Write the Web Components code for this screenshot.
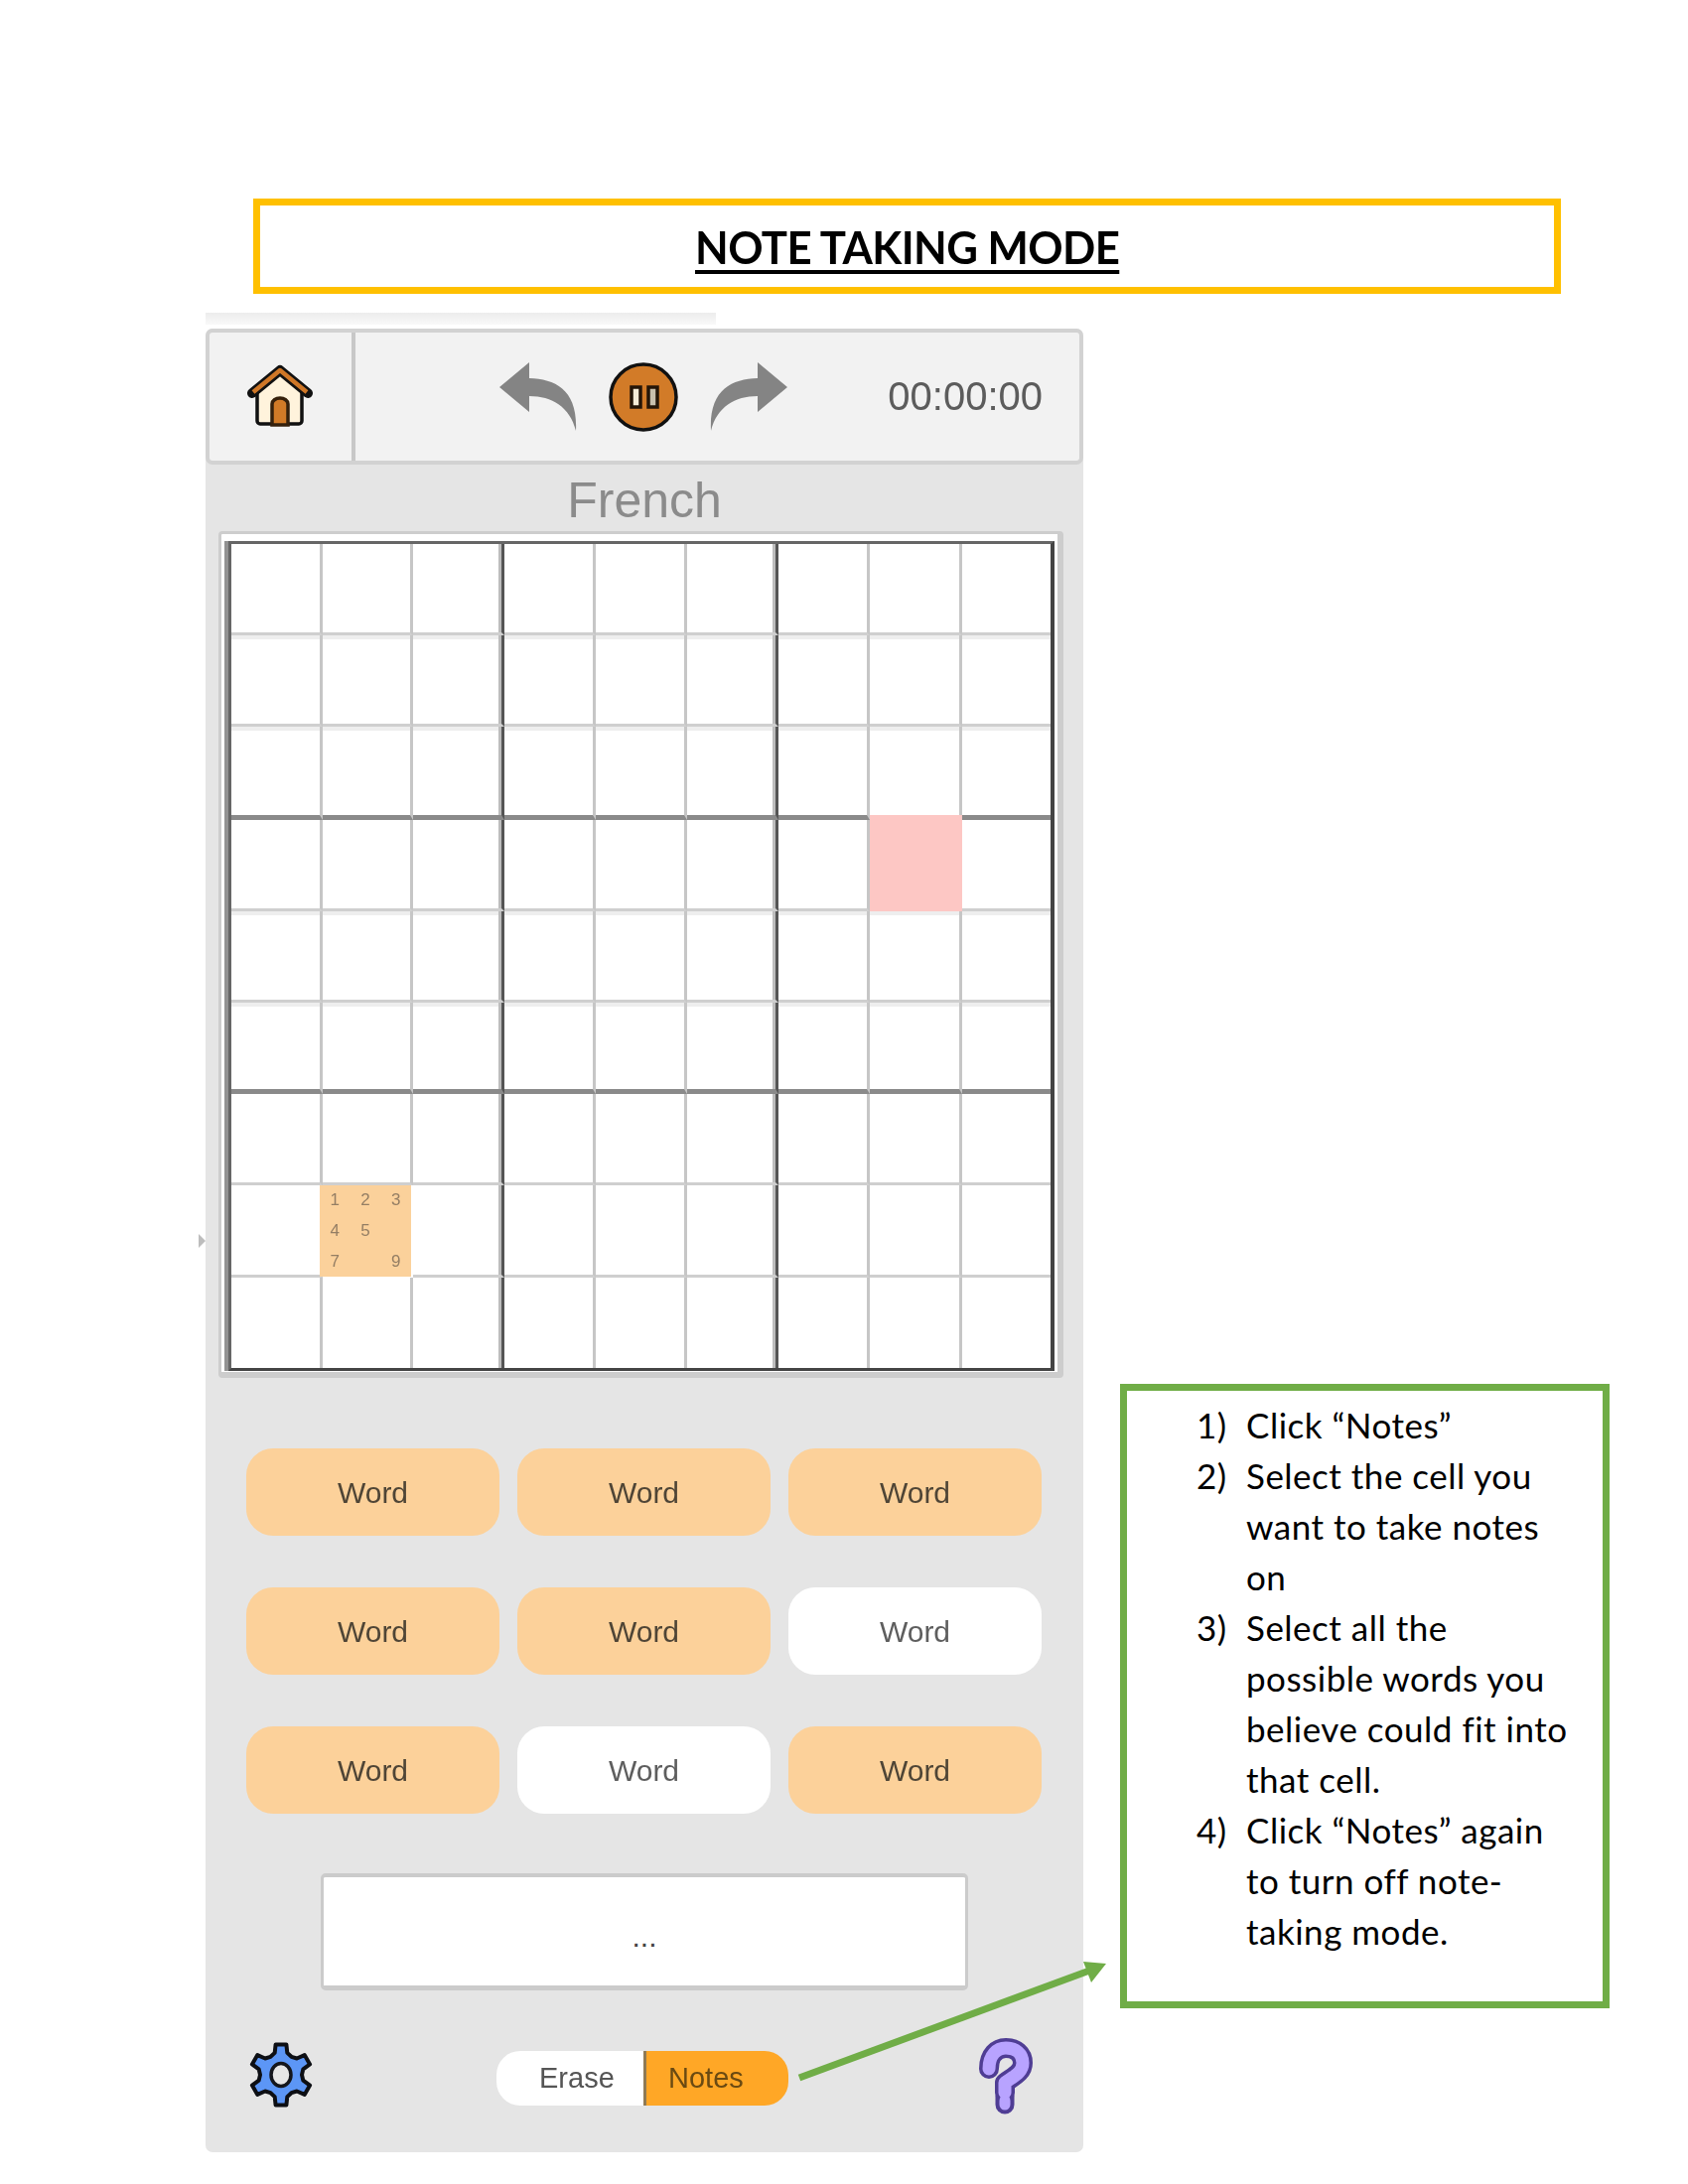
<!DOCTYPE html>
<html>
<head>
<meta charset="utf-8">
<title>Note taking mode</title>
<style>
body { margin: 0; background: #fff; font-family: "Liberation Sans", Arial, sans-serif; }
</style>
</head>
<body>
<note-page>
  <title-banner>NOTE TAKING MODE</title-banner>
  <game-panel></game-panel>
  <help-box>
    <li>Click “Notes”</li>
    <li>Select the cell you want to take notes on</li>
    <li>Select all the possible words you believe could fit into that cell.</li>
    <li>Click “Notes” again to turn off note-taking mode.</li>
  </help-box>
</note-page>

<script>
// small helper so every element below looks the same
function shadow(el, html) {
  el.attachShadow({ mode: "open" }).innerHTML = html;
}

class NotePage extends HTMLElement {
  constructor() {
    super();
    shadow(this, `<style>
:host { display: block; position: relative; width: 1700px; height: 2200px; padding-top: 200px; box-sizing: border-box; }
.strip { width: 514px; height: 12px; margin: 19px 0 4px 207px; background: linear-gradient(#ececec, #f9f9f9); }
.row { display: flex; align-items: flex-start; padding-left: 207px; }
.arrow { position: absolute; left: 0; top: 0; pointer-events: none; }
::slotted(help-box) { margin: 1063px 0 0 37px; }
</style>
<slot name="top"></slot>
<div class="strip"></div>
<div class="row"><slot></slot></div>
<svg class="arrow" width="1700" height="2200">
  <line x1="805" y1="2093" x2="1100" y2="1984" stroke="#70ad47" stroke-width="7"/>
  <polygon points="1114,1978 1091,1976 1099,1997" fill="#70ad47"/>
</svg>`);
    this.querySelector("title-banner").slot = "top";
  }
}

class TitleBanner extends HTMLElement {
  constructor() {
    super();
    shadow(this, `<style>
:host { display: flex; align-items: center; justify-content: center; box-sizing: border-box; width: 1317px; height: 96px; margin-left: 255px; border: 7px solid #ffc000; font: 700 46px Lato, sans-serif; color: #000; letter-spacing: -.6px; }
span { display: inline-block; transform: scaleX(.951); text-decoration: underline; text-decoration-thickness: 4px; text-underline-offset: 6px; }
</style><span><slot></slot></span>`);
  }
}

class GameHeader extends HTMLElement {
  constructor() {
    super();
    shadow(this, `<style>
:host { display: flex; align-items: center; box-sizing: border-box; height: 137px; background: #f2f2f2; border: 4px solid #d2d2d2; border-radius: 7px; color: #5c5c5c; font-size: 40px; }
.home { display: flex; align-items: center; justify-content: center; box-sizing: border-box; width: 147px; height: 100%; border-right: 4px solid #c8c8c8; }
.controls { display: flex; align-items: center; flex: 1; padding: 0 37px 0 140px; }
.pause { margin: 0 24px; }
.time { margin-left: auto; filter: blur(.5px); }
.redo { transform: scaleX(-1); }
svg { filter: blur(.5px); }
</style>
<div class="home">
  <svg width="72" height="72" viewBox="0 0 72 72" style="margin:-2px 0 0 -2px">
    <path d="M13 28 36 11 58 28V61a3 3 0 0 1-3 3H16a3 3 0 0 1-3-3z" fill="#fff3dc" stroke="#111" stroke-width="3.5"/>
    <path d="M28 65V44a8 6 0 0 1 16 0V65z" fill="#d17a27" stroke="#35200c" stroke-width="3.5"/>
    <path d="M8 33 36 10 64 33" fill="none" stroke="#111" stroke-width="10" stroke-linecap="round" stroke-linejoin="round"/>
    <path d="M9 32 36 10 63 32" fill="none" stroke="#cf7727" stroke-width="4.5" stroke-linejoin="round"/>
  </svg>
</div>
<div class="controls">
  <svg width="90" height="80" viewBox="0 0 90 80"><path d="M5 30 35 5V21C62 22 84 33 82 74 76 50 58 39 35 39V55z" fill="#848484"/></svg>
  <svg class="pause" width="72" height="72" viewBox="0 0 72 72">
    <circle cx="36" cy="36" r="33" fill="#d27b28" stroke="#111" stroke-width="3.5"/>
    <rect x="24" y="26" width="9" height="20" fill="#f5ecd7" stroke="#241608" stroke-width="3.5"/>
    <rect x="41" y="26" width="9" height="20" fill="#c8c0ad" stroke="#241608" stroke-width="3.5"/>
  </svg>
  <svg class="redo" width="90" height="80" viewBox="0 0 90 80"><path d="M5 30 35 5V21C62 22 84 33 82 74 76 50 58 39 35 39V55z" fill="#848484"/></svg>
  <span class="time">00:00:00</span>
</div>`);
  }
}

// col widths and row heights are not all equal in the reference
const COLS = "92px 91px 92px 92px 92px 92px 92px 93px 89px";
const ROWS = "92px 92px 94px 92px 92px 92px 92px 93px 91px";

class SudokuBoard extends HTMLElement {
  constructor() {
    super();
    let cells = "";
    for (let r = 0; r < 9; r++) {
      for (let c = 0; c < 9; c++) {
        const cls = [];
        if (c == 2 || c == 5) cls.push("tv");
        if (c == 8) cls.push("nr");
        if (r == 2 || r == 5) cls.push("th");
        if (r == 8) cls.push("nb");
        if (r == 1 || r == 2 || r == 4 || r == 5) cls.push("band");
        if (r == 3 && c == 7) cls.push("pink");
        if (r == 7 && c == 1) {
          cls.push("note");
          cells += `<div class="${cls.join(" ")}"><note-digits></note-digits></div>`;
        } else {
          cells += `<div class="${cls.join(" ")}"></div>`;
        }
      }
    }
    shadow(this, `<style>
:host { display: block; box-sizing: border-box; width: 851px; height: 853px; margin-left: 13px; padding: 7px 6px 0 6px; background: #fff; border: solid #cdcdcd; border-width: 3px 6px 6px 3px; border-radius: 4px; }
.board { display: grid; grid-template-columns: ${COLS}; grid-template-rows: ${ROWS}; width: 832px; box-sizing: border-box; border: solid #666; border-width: 3px 4px 3px 3px; border-right-color: #444; border-bottom-color: #444; margin-left: 1px; box-shadow: -4px 0 0 #929292; }
.board div { box-sizing: border-box; border-right: 3px solid #c6c6c6; border-bottom: 3px solid #cfcfcf; }
.band { box-shadow: inset 0 4px 0 #eeeeee; }
.tv { border-right-color: #555 !important; box-shadow: inset -3px 0 0 #bdbdbd; }
.tv.band { box-shadow: inset -3px 0 0 #bdbdbd, inset 0 4px 0 #eeeeee; }
.th { border-bottom: 5px solid #8a8a8a !important; }
.nr { border-right: 0 !important; }
.nb { border-bottom: 0 !important; }
.board .pink { background: #fdc7c4; margin-top: -5px; border-right-color: #fdc7c4; border-bottom-color: #fdc7c4; position: relative; }
.board .note { background: #fbd19b; margin: 0 2px 1px -3px; border: 0; box-shadow: none; }
</style><div class="board">${cells}</div>`);
  }
}

class NoteDigits extends HTMLElement {
  constructor() {
    super();
    const nums = [1, 2, 3, 4, 5, "", 7, "", 9];
    shadow(this, `<style>
:host { display: grid; grid-template-columns: repeat(3, 1fr); grid-template-rows: repeat(3, 1fr); height: 100%; font-size: 17px; color: #947e64; text-align: center; align-items: center; filter: blur(.4px); }
</style>${nums.map(n => `<span>${n}</span>`).join("")}`);
  }
}

class WordButton extends HTMLElement {
  constructor() {
    super();
    shadow(this, `<style>
:host { display: flex; align-items: center; justify-content: center; height: 88px; border-radius: 27px; background: #fcd19a; font-size: 30px; color: #4f4536; }
:host([plain]) { background: #fff; color: #5e5e5e; }
span { filter: blur(.5px); padding-top: 2px; }
</style><span><slot></slot></span>`);
  }
}

class NotesToggle extends HTMLElement {
  constructor() {
    super();
    shadow(this, `<style>
:host { display: flex; width: 294px; height: 55px; border-radius: 24px; overflow: hidden; font-size: 29px; line-height: 55px; align-self: center; }
.erase { box-sizing: border-box; width: 148px; padding-left: 43px; background: #fff; color: #555; }
.notes { flex: 1; padding-left: 22px; background: #ffa726; color: #6b4a12; border-left: 3px solid #8f7a55; }
span { display: inline-block; filter: blur(.5px); }
</style><div class="erase"><span>Erase</span></div><div class="notes"><span>Notes</span></div>`);
  }
}

class GearIcon extends HTMLElement {
  constructor() {
    super();
    // six teeth, tips at top and bottom
    const pts = [];
    const at = (deg, r) => {
      const a = deg * Math.PI / 180;
      return (35 + r * Math.cos(a)).toFixed(1) + "," + (38 + r * Math.sin(a)).toFixed(1);
    };
    for (let i = 0; i < 6; i++) {
      const d = -90 + 60 * i;
      pts.push(at(d - 10, 31), at(d + 10, 31), at(d + 16, 23), at(d + 30, 21), at(d + 44, 23));
    }
    shadow(this, `<style>:host { display: block; width: 70px; height: 80px; filter: blur(.5px); }</style>
<svg width="70" height="80" viewBox="0 0 70 80">
  <polygon points="${pts.join(" ")}" fill="#5c96f6" stroke="#0d0f14" stroke-width="4" stroke-linejoin="round"/>
  <ellipse cx="35" cy="38" rx="10" ry="11.5" fill="#e6e6e6" stroke="#14161c" stroke-width="3.5"/>
</svg>`);
  }
}

class HelpIcon extends HTMLElement {
  constructor() {
    super();
    const d = "M10 32C10 18 18 11 27 11 37 11 44 17 44 26 44 36 34 40 26 46V56";
    shadow(this, `<style>:host { display: block; width: 66px; height: 84px; filter: blur(.5px); }</style>
<svg width="66" height="84" viewBox="0 0 66 84" style="display:block;margin-left:6px">
  <path d="${d}" fill="none" stroke="#4f3d94" stroke-width="20" stroke-linecap="round" stroke-linejoin="round"/>
  <path d="M26 60V68" stroke="#4f3d94" stroke-width="19" stroke-linecap="round"/>
  <path d="${d}" fill="none" stroke="#b8a3ff" stroke-width="13" stroke-linecap="round" stroke-linejoin="round"/>
  <path d="M26 64V68" stroke="#b8a3ff" stroke-width="11" stroke-linecap="round"/>
</svg>`);
  }
}

class GamePanel extends HTMLElement {
  constructor() {
    super();
    const words = [1, 1, 1, 1, 1, 0, 1, 0, 1];
    shadow(this, `<style>
:host { display: block; position: relative; flex: none; box-sizing: border-box; width: 884px; height: 1837px; background: #e5e5e5; border-radius: 7px; }
.lang { height: 67px; line-height: 72px; text-align: center; font-size: 50px; color: #8b8b8b; }
.lang span { filter: blur(.5px); display: inline-block; }
.words { display: grid; grid-template-columns: repeat(3, 255px); column-gap: 18px; row-gap: 52px; margin: 71px 0 0 41px; }
.answer { box-sizing: border-box; width: 652px; height: 118px; margin: 60px 0 0 116px; padding-top: 40px; background: #fff; border: solid #cbcbcb; border-width: 4px 3px 5px; border-radius: 5px; text-align: center; font-size: 30px; line-height: 40px; color: #444; }
.tools { display: flex; align-items: flex-start; margin: 47px 0 0 41px; }
.tools notes-toggle { margin: -2px 0 0 182px; }
.tools help-icon { margin-left: 186px; }
.mark { position: absolute; left: -7px; top: 912px; width: 0; height: 0; border-left: 7px solid #bdbdbd; border-top: 7px solid transparent; border-bottom: 7px solid transparent; }
</style>
<game-header></game-header>
<div class="lang"><span>French</span></div>
<sudoku-board></sudoku-board>
<div class="words">${words.map(w => `<word-button${w ? "" : " plain"}>Word</word-button>`).join("")}</div>
<div class="answer">...</div>
<div class="tools"><gear-icon></gear-icon><notes-toggle></notes-toggle><help-icon></help-icon></div>
<div class="mark"></div>`);
  }
}

class HelpBox extends HTMLElement {
  constructor() {
    super();
    shadow(this, `<style>
:host { display: block; flex: none; box-sizing: border-box; width: 493px; height: 629px; padding: 9px 30px 0 120px; border: 7px solid #70ad47; font: 35px/51px Lato, sans-serif; letter-spacing: .5px; color: #000; }
</style><slot></slot>`);
    // numbering done here since li sits in light dom
    [...this.querySelectorAll("li")].forEach((li, i) => {
      li.style.cssText = "display:block;position:relative;";
      const n = document.createElement("span");
      n.textContent = (i + 1) + ")";
      n.style.cssText = "position:absolute;left:-50px;";
      li.prepend(n);
    });
  }
}

customElements.define("title-banner", TitleBanner);
customElements.define("game-header", GameHeader);
customElements.define("note-digits", NoteDigits);
customElements.define("sudoku-board", SudokuBoard);
customElements.define("word-button", WordButton);
customElements.define("notes-toggle", NotesToggle);
customElements.define("gear-icon", GearIcon);
customElements.define("help-icon", HelpIcon);
customElements.define("game-panel", GamePanel);
customElements.define("help-box", HelpBox);
customElements.define("note-page", NotePage);
</script>
</body>
</html>
